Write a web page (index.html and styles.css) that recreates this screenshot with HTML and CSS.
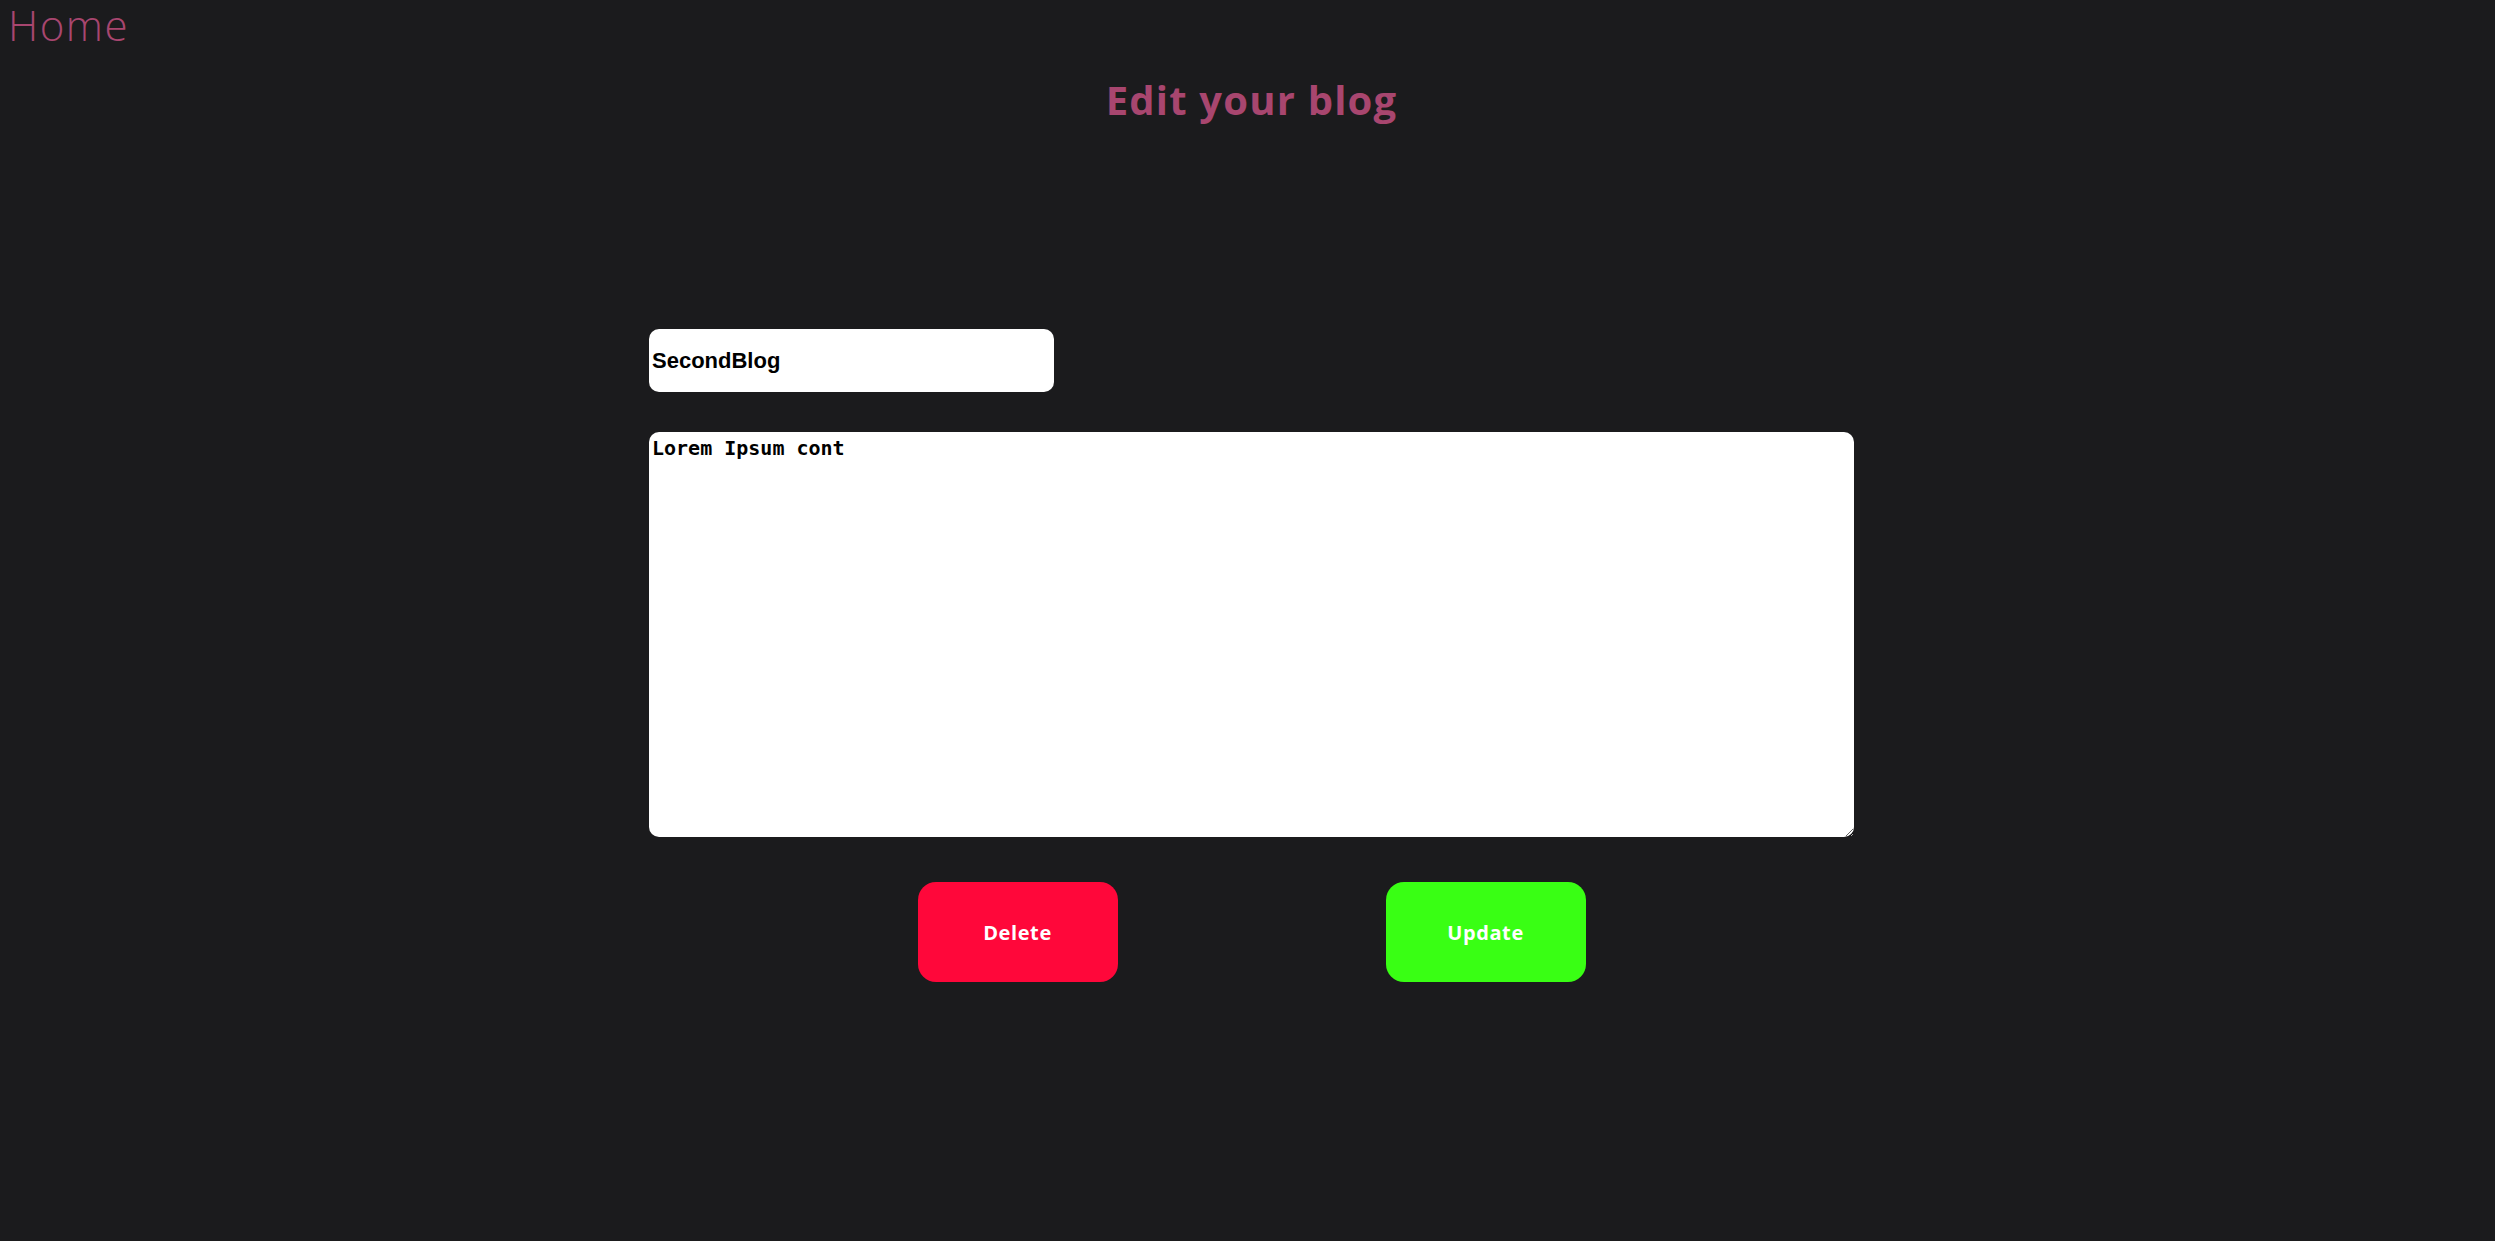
FILE: index.html
```html
<!DOCTYPE html>
<html>
<head>
<meta charset="utf-8">
<link rel="stylesheet" href="styles.css">
</head>
<body>
<nav class="nav"><a class="home" href="#">Home</a></nav>
<main class="page">
  <h1 class="title">Edit your blog</h1>
  <form class="form">
    <input class="title-input" type="text" value="SecondBlog">
    <textarea class="body-input">Lorem Ipsum cont</textarea>
    <div class="actions">
      <button type="button" class="btn btn-delete">Delete</button>
      <button type="button" class="btn btn-update">Update</button>
    </div>
  </form>
</main>
</body>
</html>
```
FILE: styles.css
```css
html, body {
  margin: 0;
  padding: 0;
  background: #1b1b1d;
  height: 100%;
}
body {
  font-family: "Open Sans", "Noto Sans", sans-serif;
}
.nav {
  height: 50px;
  padding-left: 8px;
}
.home {
  color: #a8466f;
  text-decoration: none;
  font-weight: 350;
  font-size: 42px;
  letter-spacing: 1.5px;
  line-height: 50px;
}
.page {
  padding-left: 8px;
}
.title {
  margin: 24px 0 0;
  text-align: center;
  color: #a8466f;
  font-size: 40px;
  font-weight: 700;
  letter-spacing: 1.2px;
  line-height: 52px;
}
.form {
  width: 1205px;
  margin: 0 auto;
  padding-top: 203px;
  display: flex;
  flex-direction: column;
  align-items: flex-start;
}
.title-input {
  box-sizing: border-box;
  width: 405px;
  height: 63px;
  border: none;
  border-radius: 10px;
  padding: 0 3px;
  background: #fff;
  color: #000;
  font-family: "Liberation Sans", Arial, sans-serif;
  font-weight: 700;
  font-size: 22px;
  outline: none;
}
.body-input {
  box-sizing: border-box;
  margin-top: 40px;
  width: 1205px;
  height: 405px;
  border: none;
  border-radius: 10px;
  padding: 4px 3px;
  background: #fff;
  color: #000;
  font-family: "DejaVu Sans Mono", "Liberation Mono", monospace;
  font-weight: 700;
  font-size: 20px;
  outline: none;
}
.actions {
  align-self: stretch;
  margin-top: 45px;
  display: flex;
  justify-content: center;
  gap: 268px;
}
.btn {
  width: 200px;
  height: 100px;
  border: none;
  border-radius: 18px;
  color: #fff;
  font-family: "Open Sans", "Noto Sans", sans-serif;
  font-weight: 700;
  font-size: 20px;
  letter-spacing: 0.6px;
  cursor: pointer;
}
.btn-delete {
  background: #ff073a;
}
.btn-update {
  background: #39ff14;
}
```
